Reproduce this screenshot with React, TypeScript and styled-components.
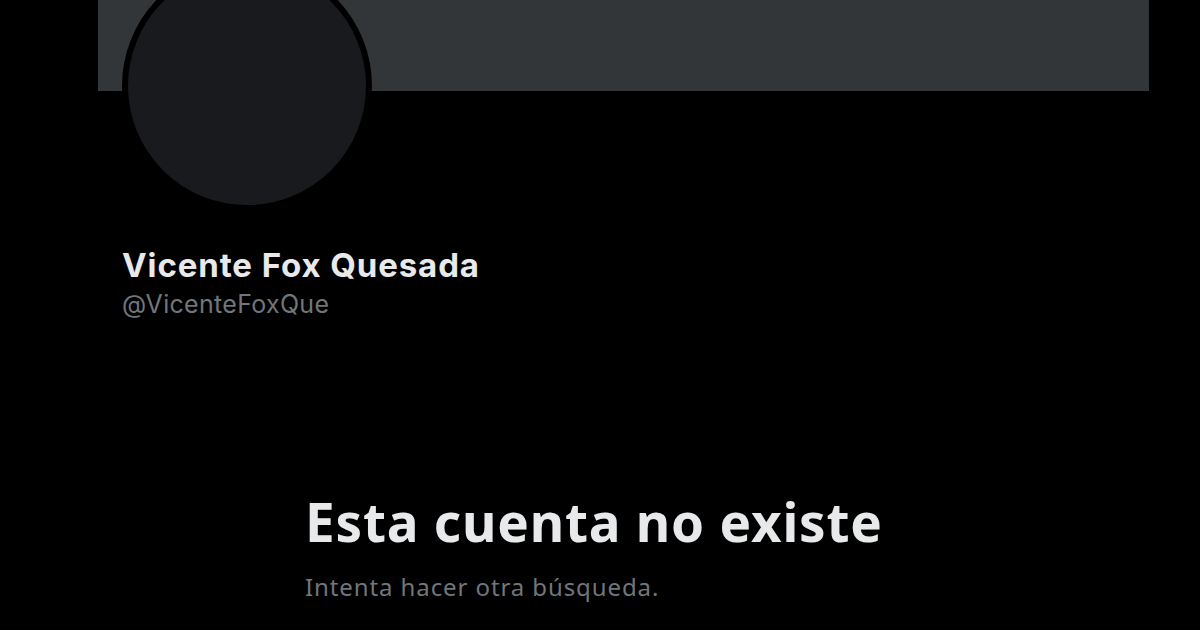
import React from 'react';
import styled, { createGlobalStyle } from 'styled-components';

const GlobalStyle = createGlobalStyle`
  html, body {
    margin: 0;
    padding: 0;
    background: #000;
  }
  body {
    font-family: "Noto Sans", "Open Sans", Arial, sans-serif;
    -webkit-font-smoothing: antialiased;
  }
`;

const Page = styled.div`
  width: 1200px;
  height: 630px;
  overflow: hidden;
  background: #000;
  display: flex;
  flex-direction: column;
`;

const Banner = styled.div`
  margin-left: 98px;
  width: 1051px;
  height: 91px;
  flex-shrink: 0;
  background: #333639;
`;

const ProfileHead = styled.div`
  padding-left: 122px;
  display: flex;
  flex-direction: column;
  font-family: Inter, "Noto Sans", Arial, sans-serif;
`;

const Avatar = styled.div`
  margin-top: -130px;
  width: 238px;
  height: 238px;
  border-radius: 50%;
  border: 6px solid #000;
  background: #181a1d;
`;

const Name = styled.div`
  margin-top: 35px;
  font-size: 33px;
  font-weight: 700;
  line-height: 38px;
  letter-spacing: 0.9px;
  color: #e7e9ea;
`;

const Handle = styled.div`
  margin-top: 4px;
  font-size: 25px;
  line-height: 32px;
  letter-spacing: 0.3px;
  color: #71767b;
`;

const EmptyState = styled.div`
  padding-left: 305px;
  margin-top: 170px;
  display: flex;
  flex-direction: column;
`;

const Heading = styled.h1`
  margin: 0;
  font-size: 53px;
  font-weight: 700;
  line-height: 64px;
  letter-spacing: 0.8px;
  color: #e7e9ea;
`;

const Message = styled.p`
  margin: 17px 0 0;
  font-size: 24px;
  line-height: 32px;
  letter-spacing: 0.9px;
  color: #71767b;
`;

const App: React.FC = () => {
  return (
    <Page>
      <GlobalStyle />
      <Banner />
      <ProfileHead>
        <Avatar />
        <Name>Vicente Fox Quesada</Name>
        <Handle>@VicenteFoxQue</Handle>
      </ProfileHead>
      <EmptyState>
        <Heading>Esta cuenta no existe</Heading>
        <Message>Intenta hacer otra búsqueda.</Message>
      </EmptyState>
    </Page>
  );
};

export default App;
